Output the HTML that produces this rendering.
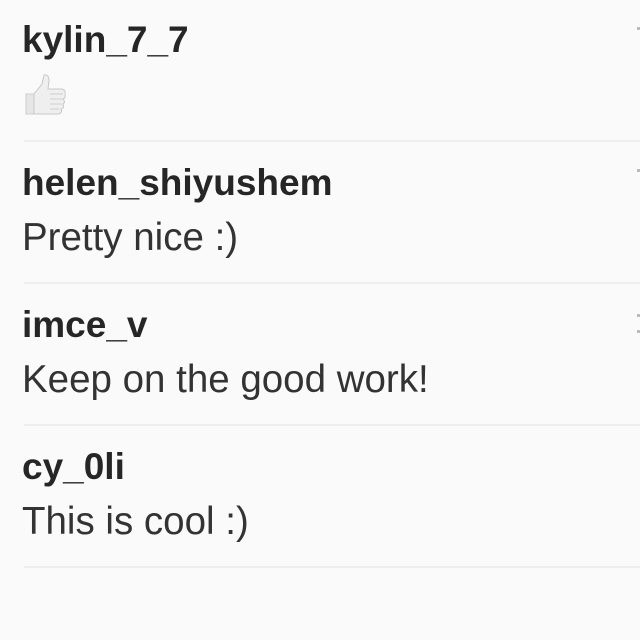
<!DOCTYPE html>
<html><head><style>
body{margin:0;width:640px;height:640px;background:#fafafa;overflow:hidden;font-family:"Liberation Sans",sans-serif;position:relative}
.t{position:absolute;left:22px;white-space:nowrap;line-height:1}
.u{font-weight:bold;font-size:37px;color:#262626}
.c{font-size:38.5px;color:#333}
.sep{position:absolute;left:24px;right:0;height:2px;background:#eeeeee}
.dot{position:absolute;left:637px;width:3px;height:3px;background:#bbb}
</style></head><body>
<div class="t u" style="top:21px">kylin_7_7</div>
<svg style="position:absolute;left:24px;top:72px" width="44" height="44" viewBox="0 0 44 44">
<path d="M2 22 h8 v20 h-8 z" fill="#e6e6e6" stroke="#cfcfcf"/>
<path d="M10 22 L18 12 L20 3 Q25 2 25 9 L24 17 H38 Q42 18 41 22 Q42 26 39 27 Q42 30 39 32 Q41 36 37 37 Q39 41 34 42 H10 z" fill="#efefef" stroke="#c8c8c8"/>
<path d="M26 22 H39 M26 27 H39 M26 32 H38 M26 37 H35" stroke="#cfcfcf" fill="none"/>
</svg>
<div class="sep" style="top:140px"></div>
<div class="t u" style="top:164px">helen_shiyushem</div>
<div class="t c" style="top:219px">Pretty nice :)</div>
<div class="sep" style="top:282px"></div>
<div class="t u" style="top:306px">imce_v</div>
<div class="t c" style="top:361px">Keep on the good work!</div>
<div class="sep" style="top:424px"></div>
<div class="t u" style="top:448px">cy_0li</div>
<div class="t c" style="top:503px">This is cool :)</div>
<div class="sep" style="top:566px"></div>
<div class="dot" style="top:27px"></div>
<div class="dot" style="top:169px"></div>
<div class="dot" style="top:314px"></div>
<div class="dot" style="top:330px"></div>
</body></html>
